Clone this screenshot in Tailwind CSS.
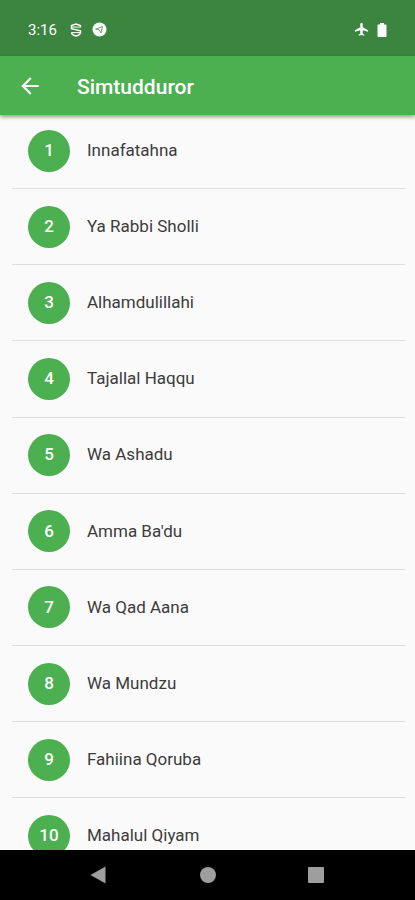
<!DOCTYPE html>
<html lang="id">
<head>
  <meta charset="UTF-8" />
  <meta name="viewport" content="width=device-width, initial-scale=1.0"/>
  <title>Simtudduror</title>
  <script src="https://cdn.jsdelivr.net/npm/@tailwindcss/browser@4"></script>
</head>
<body class="flex flex-col h-[900px] overflow-hidden bg-[#fafafa] font-['Roboto',sans-serif]">

  <!-- Status bar -->
  <div class="h-14 shrink-0 bg-[#3b853e] text-white flex items-center pt-[3px] pl-7 pr-[28px]">
    <span class="w-[30px] pt-px text-[15px] leading-none whitespace-nowrap">3:16</span>
    <svg class="ml-[12px] w-3 h-[14px]" viewBox="0 0 12 14" fill="none" stroke="white" stroke-width="1.4">
      <path d="M10.500 4.300V2.600L6 1L1.500 2.600v3.200l9 2v1.800c0 1.500-1.500 2.700-4.500 3.400c-3-.7-4.500-1.900-4.500-3.400"/>
      <path d="M2 4.100h8.500M1.500 9.600h8.500" stroke-width="1"/>
    </svg>
    <svg class="ml-[10px] w-[15px] h-[15px]" viewBox="0 0 15 15">
      <circle cx="7.500" cy="7.500" r="7" fill="white"/>
      <path d="M3.500 7.200L10.500 4.500L9 11L7.200 7.800z" fill="none" stroke="#6fa071" stroke-width="1"/>
    </svg>
    <svg class="ml-auto w-[15px] h-[15px]" viewBox="0 0 24 24" fill="white">
      <path d="M22.500 15.500v-2.200l-8.500-5V3.500c0-1.100-.9-2-2-2s-2 .9-2 2v4.800l-8.500 5v2.200l8.500-2.500V18.500l-2.500 1.800V22l4.500-1.200 4.500 1.200v-1.700L14 18.500v-5.500z"/>
    </svg>
    <svg class="ml-[8px] w-[10px] h-[14px]" viewBox="0 0 10 14" fill="white">
      <path d="M3 0h4v1.500h1.700a.8.8 0 0 1 .8.800v10.900a.8.8 0 0 1-.8.800H1.300a.8.8 0 0 1-.8-.800V2.300a.8.8 0 0 1 .8-.800H3z"/>
    </svg>
  </div>

  <!-- App bar -->
  <header class="relative z-10 h-[59px] shrink-0 bg-[#4caf50] text-white flex items-center pt-px pl-[17px] shadow-[0_2px_4px_rgba(0,0,0,0.4)]">
    <svg class="w-[26px] h-[26px]" viewBox="0 0 24 24" fill="white">
      <path d="M20 11H7.830l5.590-5.590L12 4l-8 8 8 8 1.410-1.410L7.830 13H20v-2z"/>
    </svg>
    <h1 class="ml-[34px] pt-0.5 text-[21px] font-medium leading-none whitespace-nowrap">Simtudduror</h1>
  </header>

  <!-- List -->
  <main class="flex-1 min-h-0 overflow-hidden">
    <ul id="list" class="-mt-[2px] pl-3 pr-2.5"></ul>
  </main>

  <!-- Navigation bar -->
  <nav class="h-[50px] shrink-0 bg-black flex items-center pl-[90px]">
    <svg class="w-4 h-[18px]" viewBox="0 0 16 18" fill="#9e9e9e"><path d="M15.500.500v17L.500 9z"/></svg>
    <div class="ml-[94px] w-4 h-4 rounded-full bg-[#9e9e9e]"></div>
    <div class="ml-[92px] w-4 h-4 rounded-[1px] bg-[#9e9e9e]"></div>
  </nav>

  <script>
    const titles = [
      "Innafatahna",
      "Ya Rabbi Sholli",
      "Alhamdulillahi",
      "Tajallal Haqqu",
      "Wa Ashadu",
      "Amma Ba'du",
      "Wa Qad Aana",
      "Wa Mundzu",
      "Fahiina Qoruba",
      "Mahalul Qiyam"
    ];

    document.getElementById("list").innerHTML = titles.map((title, i) => `
      <li class="h-[76.150px] flex items-center pl-4 border-b border-[#dedede]">
        <span class="w-[42px] h-[42px] rounded-full bg-[#4caf50] text-white text-[17px] font-medium flex items-center justify-center">${i + 1}</span>
        <span class="ml-[17px] text-[17px] text-[#3c3c3c] whitespace-nowrap">${title}</span>
      </li>
    `).join("");
  </script>

</body>
</html>
